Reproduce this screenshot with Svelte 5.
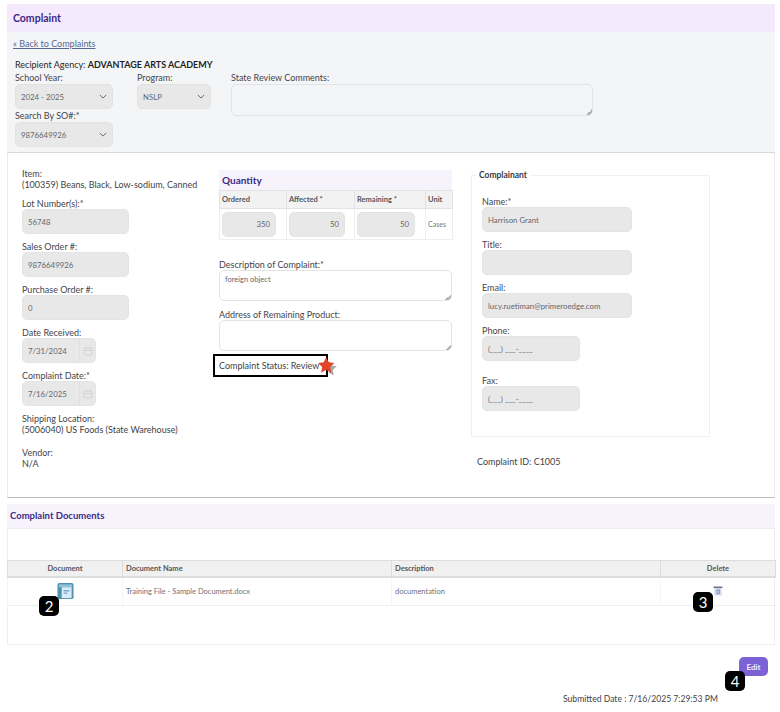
<script>
  const documents = [
    { name: 'Training File - Sample Document.docx', description: 'documentation' }
  ];

  const leftFields = [
    { label: 'Lot Number(s):*', value: '56748' },
    { label: 'Sales Order #:', value: '9876649926' },
    { label: 'Purchase Order #:', value: '0' }
  ];

  const dateFields = [
    { label: 'Date Received:', value: '7/31/2024' },
    { label: 'Complaint Date:*', value: '7/16/2025' }
  ];

  const complainant = [
    { label: 'Name:*', value: 'Harrison Grant', cls: 'wide' },
    { label: 'Title:', value: '', cls: 'wide' },
    { label: 'Email:', value: 'lucy.ruetiman@primeroedge.com', cls: 'wide' },
    { label: 'Phone:', value: '(___) ___-____', cls: 'short' },
    { label: 'Fax:', value: '(___) ___-____', cls: 'short fax' }
  ];
</script>

{#snippet chevron()}
  <svg class="chevron" viewBox="0 0 10 6" fill="none" stroke="#666" stroke-width="1.2">
    <path d="M1 1l4 4 4-4" />
  </svg>
{/snippet}

<div class="page">
  <div class="panel-title">Complaint</div>

  <section class="filters">
    <a class="back" href="#top">« Back to Complaints</a>
    <div class="agency">Recipient Agency: <strong>ADVANTAGE ARTS ACADEMY</strong></div>
    <div class="filter-grid">
      <div class="filter-col">
        <label class="lbl" for="year">School Year:</label>
        <div class="select-wrap year">
          <select id="year"><option>2024 - 2025</option></select>
          {@render chevron()}
        </div>
        <label class="lbl so" for="so">Search By SO#:*</label>
        <div class="select-wrap year">
          <select id="so"><option>9876649926</option></select>
          {@render chevron()}
        </div>
      </div>
      <div>
        <label class="lbl" for="program">Program:</label>
        <div class="select-wrap program">
          <select id="program"><option>NSLP</option></select>
          {@render chevron()}
        </div>
      </div>
      <div>
        <label class="lbl" for="comments">State Review Comments:</label>
        <textarea id="comments" class="comments"></textarea>
      </div>
    </div>
  </section>

  <section class="details">
    <div class="col-left">
      <div class="lbl">Item:</div>
      <div class="text-value item">(100359) Beans, Black, Low-sodium, Canned</div>

      {#each leftFields as f}
        <div class="field">
          <div class="lbl">{f.label}</div>
          <input class="input left-input" value={f.value} />
        </div>
      {/each}

      {#each dateFields as f}
        <div class="field">
          <div class="lbl">{f.label}</div>
          <div class="date-input">
            <span>{f.value}</span>
            <span class="cal">
              <svg viewBox="0 0 10 10" fill="none" stroke="#d3d3d3" stroke-width="1">
                <rect x="1" y="2" width="8" height="7" rx="1" />
                <path d="M1 4.5h8M3 1v2M7 1v2" />
              </svg>
            </span>
          </div>
        </div>
      {/each}

      <div class="lbl">Shipping Location:</div>
      <div class="text-value">(5006040) US Foods (State Warehouse)</div>
      <div class="lbl vendor">Vendor:</div>
      <div class="text-value">N/A</div>
    </div>

    <div class="col-mid">
      <div class="qty-title">Quantity</div>
      <table class="qty">
        <colgroup>
          <col style="width: 67px" />
          <col style="width: 68px" />
          <col style="width: 71px" />
          <col style="width: 27px" />
        </colgroup>
        <thead>
          <tr>
            <th>Ordered</th>
            <th>Affected *</th>
            <th>Remaining *</th>
            <th>Unit</th>
          </tr>
        </thead>
        <tbody>
          <tr>
            <td><input class="input num n1" value="350" /></td>
            <td><input class="input num n2" value="50" /></td>
            <td><input class="input num n3" value="50" /></td>
            <td class="unit">Cases</td>
          </tr>
        </tbody>
      </table>

      <div class="lbl desc">Description of Complaint:*</div>
      <textarea class="area">foreign object</textarea>
      <div class="lbl addr">Address of Remaining Product:</div>
      <textarea class="area"></textarea>

      <div class="status">
        Complaint Status: Review
        <svg class="star" viewBox="0 0 24 22">
          <path d="M13 5l2.6 5.4 6 .8-4.4 4.1 1.1 5.9-5.3-2.9z" fill="#a9a9a9" />
          <path d="M10 1l2.7 5.8 6.3.8-4.6 4.4 1.2 6.3L10 15.2 4.4 18.3 5.6 12 1 7.6l6.3-.8z" fill="#e0452c" />
        </svg>
      </div>
    </div>

    <div class="col-right">
      <fieldset class="complainant">
        <legend>Complainant</legend>
        {#each complainant as f}
          <div class="contact {f.cls}">
            <div class="lbl">{f.label}</div>
            <input class="input" value={f.value} />
          </div>
        {/each}
      </fieldset>
      <div class="complaint-id">Complaint ID: C1005</div>
    </div>
  </section>

  <div class="docs-title">Complaint Documents</div>
  <section class="docs">
    <table class="doc-table">
      <colgroup>
        <col style="width: 115px" />
        <col style="width: 269px" />
        <col style="width: 269px" />
        <col style="width: 115px" />
      </colgroup>
      <thead>
        <tr>
          <th class="center">Document</th>
          <th>Document Name</th>
          <th>Description</th>
          <th class="center">Delete</th>
        </tr>
      </thead>
      <tbody>
        {#each documents as doc}
          <tr>
            <td class="center icon-cell">
              <svg class="doc-icon" viewBox="0 0 18 18">
                <rect x="0.5" y="0.5" width="17" height="17" rx="2" fill="#4f93b0" />
                <rect x="2" y="2" width="14" height="3" fill="#8fc3d8" />
                <path d="M5 5h10.5v11.5H5z" fill="#d9ebf5" />
                <path d="M7 8h6v1.5H7zM7 10.5h4V12H7z" fill="#7fa8c9" />
              </svg>
              <span class="badge b2">2</span>
            </td>
            <td>{doc.name}</td>
            <td>{doc.description}</td>
            <td class="center icon-cell">
              <svg class="trash" viewBox="0 0 10 11">
                <path d="M0.5 1.5h9v1.5h-9z" fill="#6f7680" />
                <path d="M1.5 3h7v7.5h-7z" fill="#cfd8ec" />
                <path d="M4 5h2.5v3.5H4z" fill="none" stroke="#6d86c8" stroke-width="0.8" />
              </svg>
              <span class="badge b3">3</span>
            </td>
          </tr>
        {/each}
      </tbody>
    </table>
  </section>

  <div class="actions">
    <button class="edit">Edit</button>
    <span class="badge b4">4</span>
  </div>
  <div class="submitted">Submitted Date : 7/16/2025 7:29:53 PM</div>
</div>

<style>
  :global(body) {
    background: #fff;
  }

  .page {
    position: relative;
    width: 768px;
    margin: 4px 0 0 7px;
    font-family: "Lato", "Noto Sans", sans-serif;
    font-size: 9px;
    color: #3f3f46;
  }

  .panel-title {
    height: 28px;
    padding-left: 6px;
    line-height: 29px;
    background: #f5e9fd;
    color: #3b2a86;
    font-size: 10.5px;
    font-weight: 700;
  }

  .filters {
    height: 121px;
    box-sizing: border-box;
    padding: 6px 0 0 6px;
    background: #f4f5f7;
    border-bottom: 1px solid #d9d9d9;
  }

  .back {
    display: block;
    height: 12px;
    line-height: 12px;
    font-size: 9px;
    color: #546a8f;
  }

  .agency {
    margin: 9px 0 0 2px;
    line-height: 12px;
    color: #27272a;
  }

  .agency strong {
    font-weight: 700;
    color: #1f1f23;
  }

  .filter-grid {
    display: grid;
    grid-template-columns: 122px 94px 362px;
    margin: 1px 0 0 2px;
  }

  .lbl {
    display: block;
    height: 11px;
    line-height: 11px;
    color: #45454c;
    white-space: nowrap;
  }

  .lbl.so {
    margin-top: 1px;
  }

  .select-wrap {
    position: relative;
    height: 25px;
    margin-top: 1px;
  }

  .select-wrap.year {
    width: 98px;
  }

  .select-wrap.program {
    width: 74px;
  }

  .select-wrap select {
    width: 100%;
    height: 100%;
    padding: 0 0 0 5px;
    appearance: none;
    border: 1px solid #e2e2e2;
    border-radius: 5px;
    background: #e8e8e8;
    font: inherit;
    font-size: 7.8px;
    color: #66666c;
  }

  .chevron {
    position: absolute;
    right: 6px;
    top: 10px;
    width: 8px;
    height: 5px;
  }

  .comments {
    display: block;
    box-sizing: border-box;
    width: 362px;
    height: 32px;
    margin: 1px 0 0;
    background: #f4f5f7;
    border: 1px solid #e2e3e6;
    border-radius: 5px;
  }

  .comments::-webkit-resizer,
  .area::-webkit-resizer {
    background: linear-gradient(135deg, transparent 80%, #b5b5b5 80%, #b5b5b5 92%, transparent 92%);
  }

  .details {
    display: grid;
    grid-template-columns: 197px 252px 239px;
    box-sizing: border-box;
    height: 345px;
    padding: 15px 0 0 14px;
    border-left: 1px solid #ececec;
    border-right: 1px solid #ececec;
    border-bottom: 1px solid #b9b9b9;
  }

  .text-value {
    height: 12px;
    line-height: 12px;
    color: #3f3f46;
    white-space: nowrap;
  }

  .text-value.item {
    margin-bottom: 7px;
  }

  .field {
    margin-bottom: 7px;
  }

  .input {
    display: block;
    box-sizing: border-box;
    height: 25px;
    padding: 0 5px;
    background: #e8e8e8;
    border: 1px solid #e4e4e4;
    border-radius: 5px;
    font: inherit;
    font-size: 7.8px;
    color: #66666c;
    outline: none;
  }

  .left-input {
    width: 107px;
  }

  .date-input {
    display: flex;
    align-items: center;
    box-sizing: border-box;
    width: 74px;
    height: 25px;
    padding-left: 5px;
    background: #e8e8e8;
    border: 1px solid #e4e4e4;
    border-radius: 5px;
    font-size: 7.8px;
    color: #66666c;
  }

  .cal {
    display: flex;
    align-items: center;
    justify-content: center;
    width: 15px;
    height: 100%;
    margin-left: auto;
    border-left: 1px solid #e0e0e0;
  }

  .cal svg {
    width: 10px;
    height: 10px;
  }

  .lbl.vendor {
    margin-top: 11px;
  }

  .col-mid {
    padding: 2px 19px 0 0;
  }

  .qty-title {
    height: 20px;
    padding-left: 3px;
    line-height: 20px;
    background: #f6f3fd;
    color: #3b2a86;
    font-size: 10px;
    font-weight: 700;
  }

  .qty {
    width: 233px;
    table-layout: fixed;
    border-collapse: collapse;
  }

  .qty th {
    height: 17px;
    padding: 0 2px;
    background: #f2f2f2;
    border: 1px solid #e2e2e2;
    font-size: 7.5px;
    font-weight: 700;
    text-align: left;
    color: #55555b;
    white-space: nowrap;
  }

  .qty td {
    height: 30px;
    padding: 0 0 0 2px;
    border: 1px solid #eeeeee;
  }

  .num {
    text-align: right;
  }

  .n1 {
    width: 54px;
  }

  .n2 {
    width: 56px;
  }

  .n3 {
    width: 58px;
  }

  .unit {
    font-size: 7px;
    color: #77777c;
  }

  .lbl.desc {
    margin-top: 19px;
  }

  .lbl.addr {
    margin-top: 8px;
  }

  .area {
    display: block;
    box-sizing: border-box;
    width: 233px;
    height: 31px;
    margin: 0;
    padding: 4px 5px;
    border: 1px solid #e4e4e4;
    border-radius: 5px;
    background: #fff;
    font: inherit;
    font-size: 7.5px;
    color: #66666c;
  }

  .status {
    position: relative;
    box-sizing: border-box;
    width: 115px;
    height: 23px;
    margin: 3px 0 0 -6px;
    padding-left: 4px;
    border: 2px solid #000;
    line-height: 19px;
    color: #3f3f46;
    background: #fff;
    white-space: nowrap;
  }

  .star {
    position: absolute;
    left: 102px;
    top: 0;
    width: 22px;
    height: 20px;
  }

  .col-right {
    min-width: 0;
  }

  .complainant {
    box-sizing: border-box;
    width: 239px;
    height: 268px;
    margin: 1px 0 0;
    padding: 15px 0 0 10px;
    border: 1px solid #f0f0f0;
  }

  .complainant legend {
    margin-left: -6px;
    padding: 0 3px;
    font-size: 8.5px;
    font-weight: 700;
    color: #3a3a40;
    line-height: 12px;
  }

  .contact {
    margin-bottom: 7px;
  }

  .contact.wide .input {
    width: 150px;
  }

  .contact.short .input {
    width: 98px;
  }

  .contact.fax {
    margin-top: 14px;
  }

  .complaint-id {
    margin: 19px 0 0 6px;
    color: #3f3f46;
    line-height: 12px;
  }

  .docs-title {
    height: 24px;
    margin-top: 6px;
    padding-left: 3px;
    line-height: 24px;
    background: #f6f3fd;
    color: #3b2a86;
    font-size: 9.5px;
    font-weight: 700;
  }

  .docs {
    box-sizing: border-box;
    height: 117px;
    padding-top: 31px;
    border: 1px solid #eeeeee;
  }

  .doc-table {
    width: 768px;
    margin-left: -1px;
    table-layout: fixed;
    border-collapse: collapse;
  }

  .doc-table th {
    height: 15px;
    padding: 0 3px;
    background: #f0f0f0;
    border: 1px solid #dddddd;
    border-bottom-width: 2px;
    font-size: 7.5px;
    font-weight: 700;
    text-align: left;
    color: #55555b;
  }

  .doc-table th.center {
    text-align: center;
  }

  .doc-table td {
    height: 27px;
    padding: 0 3px;
    border-bottom: 1px solid #eeeeee;
    border-left: 1px solid #f5f5f5;
    font-size: 7.5px;
    color: #70707a;
  }

  .icon-cell {
    position: relative;
    text-align: center;
  }

  .doc-icon {
    position: absolute;
    left: 49px;
    top: 4px;
    width: 17px;
    height: 18px;
  }

  .trash {
    position: absolute;
    left: 52px;
    top: 7px;
    width: 10px;
    height: 11px;
  }

  .badge {
    position: absolute;
    display: flex;
    align-items: center;
    justify-content: center;
    width: 20px;
    height: 20px;
    border-radius: 5px;
    background: #000;
    color: #fff;
    font-size: 15px;
    font-weight: 400;
  }

  .b2 {
    left: 31px;
    top: 18px;
  }

  .b3 {
    left: 32px;
    top: 14px;
  }

  .actions {
    position: relative;
    display: flex;
    justify-content: flex-end;
    height: 19px;
    margin-top: 12px;
    padding-right: 7px;
  }

  .edit {
    width: 29px;
    height: 19px;
    padding: 0;
    border: none;
    border-radius: 5px;
    background: #7b63d6;
    color: #f1edff;
    font: inherit;
    font-size: 8px;
    font-weight: 700;
  }

  .b4 {
    left: 718px;
    top: 14px;
  }

  .submitted {
    margin: 17px 0 0 556px;
    line-height: 12px;
    font-size: 8.6px;
    color: #3f3f46;
    white-space: nowrap;
  }
</style>
